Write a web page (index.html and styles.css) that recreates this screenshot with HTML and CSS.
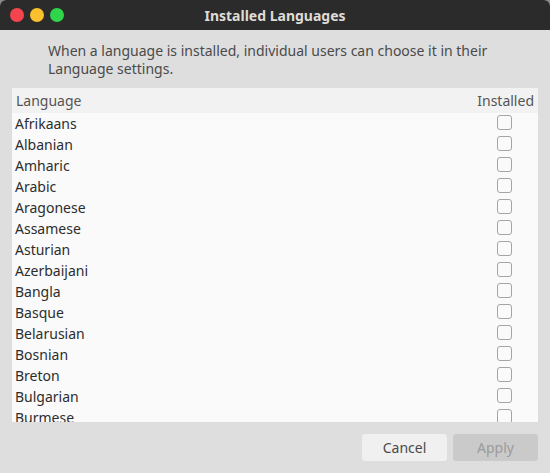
FILE: index.html
```html
<!DOCTYPE html>
<html>
<head>
<meta charset="utf-8">
<link rel="stylesheet" href="styles.css">
</head>
<body>
<div class="window">
  <div class="titlebar">
    <div class="lights">
      <span class="light red"></span>
      <span class="light yellow"></span>
      <span class="light green"></span>
    </div>
    <div class="title">Installed Languages</div>
    <div class="spacer"></div>
  </div>
  <div class="content">
    <p class="desc">When a language is installed, individual users can choose it in their Language settings.</p>
    <div class="list">
      <div class="header">
        <span class="col-lang">Language</span>
        <span class="col-inst">Installed</span>
      </div>
      <div class="rows">
        <div class="row"><span class="name">Afrikaans</span><span class="cell"><span class="check"></span></span></div>
        <div class="row"><span class="name">Albanian</span><span class="cell"><span class="check"></span></span></div>
        <div class="row"><span class="name">Amharic</span><span class="cell"><span class="check"></span></span></div>
        <div class="row"><span class="name">Arabic</span><span class="cell"><span class="check"></span></span></div>
        <div class="row"><span class="name">Aragonese</span><span class="cell"><span class="check"></span></span></div>
        <div class="row"><span class="name">Assamese</span><span class="cell"><span class="check"></span></span></div>
        <div class="row"><span class="name">Asturian</span><span class="cell"><span class="check"></span></span></div>
        <div class="row"><span class="name">Azerbaijani</span><span class="cell"><span class="check"></span></span></div>
        <div class="row"><span class="name">Bangla</span><span class="cell"><span class="check"></span></span></div>
        <div class="row"><span class="name">Basque</span><span class="cell"><span class="check"></span></span></div>
        <div class="row"><span class="name">Belarusian</span><span class="cell"><span class="check"></span></span></div>
        <div class="row"><span class="name">Bosnian</span><span class="cell"><span class="check"></span></span></div>
        <div class="row"><span class="name">Breton</span><span class="cell"><span class="check"></span></span></div>
        <div class="row"><span class="name">Bulgarian</span><span class="cell"><span class="check"></span></span></div>
        <div class="row"><span class="name">Burmese</span><span class="cell"><span class="check"></span></span></div>
      </div>
    </div>
    <div class="buttons">
      <button class="btn cancel">Cancel</button>
      <button class="btn apply" disabled>Apply</button>
    </div>
  </div>
</div>
</body>
</html>
```
FILE: styles.css
```css
html, body {
  margin: 0;
  padding: 0;
  background: #8a8a8a;
}
body {
  font-family: "Noto Sans", "DejaVu Sans", sans-serif;
  font-size: 14px;
}
.window {
  width: 550px;
  height: 473px;
  background: #dedede;
  border-radius: 6px 6px 0 0;
  overflow: hidden;
  display: flex;
  flex-direction: column;
}
.titlebar {
  height: 30px;
  flex: none;
  background: #2b2b2b;
  display: grid;
  grid-template-columns: 1fr auto 1fr;
  align-items: center;
}
.lights {
  display: flex;
  gap: 6px;
  padding-left: 10px;
}
.light {
  width: 14px;
  height: 14px;
  border-radius: 50%;
}
.red { background: #f4454e; }
.yellow { background: #fbc02d; }
.green { background: #2fd64a; }
.title {
  color: #dfdcd6;
  font-weight: bold;
  font-size: 14px;
}
.content {
  flex: 1;
  display: flex;
  flex-direction: column;
}
.desc {
  margin: 12px 40px 10px 48px;
  line-height: 18px;
  color: #4a4a4a;
}
.list {
  margin: 0 12px;
  height: 334px;
  background: #fafafa;
  overflow: hidden;
  display: flex;
  flex-direction: column;
}
.header {
  height: 25px;
  flex: none;
  background: #f2f2f2;
  display: flex;
  align-items: center;
  justify-content: space-between;
  padding: 0 4px 0 4px;
  color: #555555;
}
.rows {
  display: flex;
  flex-direction: column;
}
.row {
  height: 21px;
  flex: none;
  display: flex;
  align-items: center;
  justify-content: space-between;
  padding-left: 3px;
  color: #2d2d2d;
}
.cell {
  width: 68px;
  display: flex;
  justify-content: center;
}
.check {
  width: 13px;
  height: 13px;
  border: 1px solid #a4a4a4;
  border-radius: 3px;
  background: #fafafa;
  margin-top: -2px;
}
.buttons {
  display: flex;
  justify-content: flex-end;
  gap: 6px;
  padding: 12px 12px 0 0;
}
.btn {
  width: 85px;
  height: 27px;
  border: none;
  border-radius: 3px;
  font-family: inherit;
  font-size: 14px;
  padding: 0;
}
.cancel {
  background: #f0f0f0;
  color: #4a4a4a;
}
.apply {
  background: #cacaca;
  color: #9b9b9b;
}
```
